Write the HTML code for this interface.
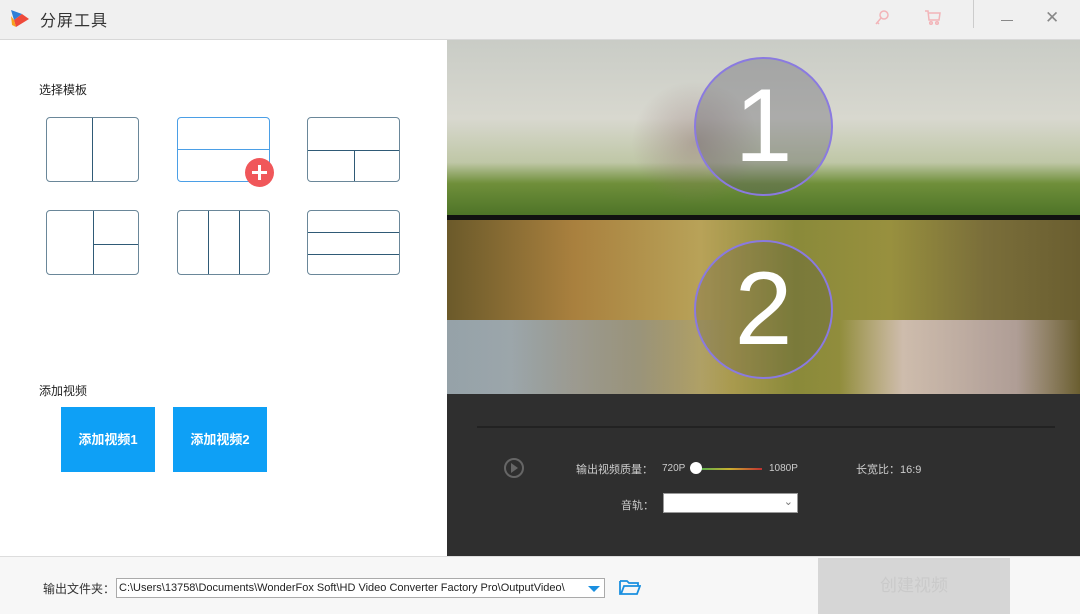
<!DOCTYPE html>
<html><head><meta charset="utf-8"><style>
*{margin:0;padding:0;box-sizing:border-box}
body{width:1080px;height:614px;overflow:hidden;background:#fff;font-family:"Liberation Sans","Noto Sans CJK SC",sans-serif;position:relative}
.abs{position:absolute}
.tpl{position:absolute;width:93px;height:65px;border:1.5px solid #6a8799;border-radius:4px;overflow:hidden}
.tpl i{position:absolute;background:#2f5a76}
.btn{position:absolute;top:407px;width:94px;height:65px;background:#0ea0f6;color:#fff;font-weight:bold;font-size:13px;text-align:center;line-height:65px}
</style></head><body>
<div class="abs" style="left:0;top:0;width:1080px;height:40px;background:#f0f0f0;border-bottom:1px solid #d8d8d8"></div>
<svg class="abs" style="left:10px;top:8px" width="20" height="20" viewBox="0 0 20 20"><path d="M1 2 L12 6 L4 12Z" fill="#2f7fd6"/><path d="M4 12 L12 6 L19 11 L6 19Z" fill="#ef4a3a"/><path d="M1 8 L4 12 L6 19 L2 17Z" fill="#f7a21c"/></svg>
<div class="abs" style="left:40px;top:7px;font-size:16px;color:#333;letter-spacing:1px">分屏工具</div>
<svg class="abs" style="left:873px;top:9px" width="18" height="18" viewBox="0 0 18 18" fill="none" stroke="#f2b4b8" stroke-width="1.5"><circle cx="11" cy="6" r="4"/><path d="M8 9 L3 15 M4 13 L6 15"/></svg>
<svg class="abs" style="left:924px;top:9px" width="18" height="17" viewBox="0 0 18 17" fill="none" stroke="#f2b4b8" stroke-width="1.5"><path d="M1 2 H4 L5 11 H15 L16 4 H5"/><circle cx="7" cy="14" r="1.3"/><circle cx="13" cy="14" r="1.3"/></svg>
<div class="abs" style="left:973px;top:0;width:1px;height:28px;background:#ccc"></div>
<div class="abs" style="left:1001px;top:20px;width:12px;height:1px;background:#888"></div>
<div class="abs" style="left:1045px;top:8px;font-size:17px;color:#888">✕</div>

<div class="abs" style="left:39px;top:81px;font-size:12px;color:#222">选择模板</div>
<div class="tpl" style="left:46px;top:117px"><i style="left:45px;top:0;width:1px;height:100%"></i></div>
<div class="tpl" style="left:177px;top:117px;border-color:#4b9fe6"><i style="left:0;top:31px;width:100%;height:1px;background:#4b9fe6"></i></div>
<div class="abs" style="left:245px;top:158px;width:29px;height:29px;border-radius:50%;background:#f0575a"><div class="abs" style="left:7px;top:13px;width:15px;height:3px;background:#fff"></div><div class="abs" style="left:13px;top:7px;width:3px;height:15px;background:#fff"></div></div>
<div class="tpl" style="left:307px;top:117px"><i style="left:0;top:32px;width:100%;height:1px"></i><i style="left:46px;top:32px;width:1px;height:33px"></i></div>
<div class="tpl" style="left:46px;top:210px"><i style="left:46px;top:0;width:1px;height:100%"></i><i style="left:46px;right:0;top:33px;height:1px"></i></div>
<div class="tpl" style="left:177px;top:210px"><i style="left:30px;top:0;width:1px;height:100%"></i><i style="left:61px;top:0;width:1px;height:100%"></i></div>
<div class="tpl" style="left:307px;top:210px"><i style="left:0;top:21px;width:100%;height:1px"></i><i style="left:0;top:43px;width:100%;height:1px"></i></div>

<div class="abs" style="left:39px;top:382px;font-size:12px;color:#222">添加视频</div>
<div class="btn" style="left:61px">添加视频1</div>
<div class="btn" style="left:173px">添加视频2</div>

<div class="abs" style="left:447px;top:40px;width:633px;height:517px;background:#2f2f2f"></div>
<div class="abs" style="left:447px;top:40px;width:633px;height:175px;background:linear-gradient(180deg,#c9ccc6 0%,#d8d8cf 45%,#bfc7a6 70%,#6f8f3a 82%,#4e7428 100%)"></div>
<div class="abs" style="left:620px;top:70px;width:150px;height:145px;background:radial-gradient(ellipse at 50% 50%,rgba(140,110,110,.45),rgba(0,0,0,0) 60%)"></div>
<div class="abs" style="left:447px;top:215px;width:633px;height:5px;background:#111"></div>
<div class="abs" style="left:447px;top:220px;width:633px;height:174px;background:linear-gradient(90deg,#6b5a2a 0%,#a9803e 20%,#b8a258 40%,#8a8a3a 55%,#98903e 70%,#7a6e3a 85%,#6a5e30 100%)"></div>
<div class="abs" style="left:447px;top:320px;width:633px;height:74px;background:linear-gradient(90deg,rgba(160,180,200,.8) 10%,rgba(130,150,170,.5) 30%,rgba(0,0,0,0) 45%,rgba(0,0,0,0) 62%,rgba(220,200,200,.8) 72%,rgba(200,180,190,.7) 90%,rgba(0,0,0,0))"></div>
<div class="abs" style="left:694px;top:57px;width:139px;height:139px;border-radius:50%;border:2px solid #8a7ae0;background:rgba(90,90,100,.35);color:#fff;font-size:104px;text-align:center;line-height:135px">1</div>
<div class="abs" style="left:694px;top:240px;width:139px;height:139px;border-radius:50%;border:2px solid #8a7ae0;background:rgba(60,60,60,.2);color:#fff;font-size:104px;text-align:center;line-height:135px">2</div>
<div class="abs" style="left:477px;top:426px;width:578px;height:2px;background:#222"></div>
<div class="abs" style="left:504px;top:458px;width:20px;height:20px;border-radius:50%;border:2px solid #666"></div>
<div class="abs" style="left:511px;top:463px;width:0;height:0;border-left:7px solid #666;border-top:5px solid transparent;border-bottom:5px solid transparent"></div>
<div class="abs" style="left:576px;top:461px;font-size:11px;color:#ccc">输出视频质量：</div>
<div class="abs" style="left:662px;top:463px;font-size:10px;color:#ccc">720P</div>
<div class="abs" style="left:697px;top:468px;width:65px;height:2px;background:linear-gradient(90deg,#4caf50,#c9b030,#c03030)"></div>
<div class="abs" style="left:690px;top:462px;width:12px;height:12px;border-radius:50%;background:#fff"></div>
<div class="abs" style="left:769px;top:463px;font-size:10px;color:#ccc">1080P</div>
<div class="abs" style="left:856px;top:461px;font-size:11px;color:#ccc">长宽比：16:9</div>
<div class="abs" style="left:621px;top:497px;font-size:11px;color:#ccc">音轨：</div>
<div class="abs" style="left:663px;top:493px;width:135px;height:20px;background:#fff;border:1px solid #999"><span class="abs" style="right:4px;top:1px;font-size:11px;color:#777">⌄</span></div>

<div class="abs" style="left:0;top:556px;width:1080px;height:58px;background:#f7f7f7;border-top:1px solid #ddd"></div>
<div class="abs" style="left:43px;top:580px;font-size:12px;color:#333">输出文件夹：</div>
<div class="abs" style="left:116px;top:578px;width:489px;height:20px;background:#fff;border:1px solid #aaa;font-size:11px;color:#222;line-height:18px;padding-left:2px;white-space:nowrap;overflow:hidden">C:\Users\13758\Documents\WonderFox Soft\HD Video Converter Factory Pro\OutputVideo\</div>
<div class="abs" style="left:588px;top:586px;width:0;height:0;border-top:6px solid #1a8fe0;border-left:6px solid transparent;border-right:6px solid transparent"></div>
<svg class="abs" style="left:619px;top:579px" width="22" height="17" viewBox="0 0 22 17" fill="none" stroke="#1a8fe0" stroke-width="1.8"><path d="M1 2 H8 L10 4 H19 V7 M1 2 V15 H18 L21 7 H5 L2 15"/></svg>
<div class="abs" style="left:818px;top:558px;width:192px;height:56px;background:#d6d6d6;color:#cacaca;font-size:17px;text-align:center;line-height:56px">创建视频</div>
</body></html>
